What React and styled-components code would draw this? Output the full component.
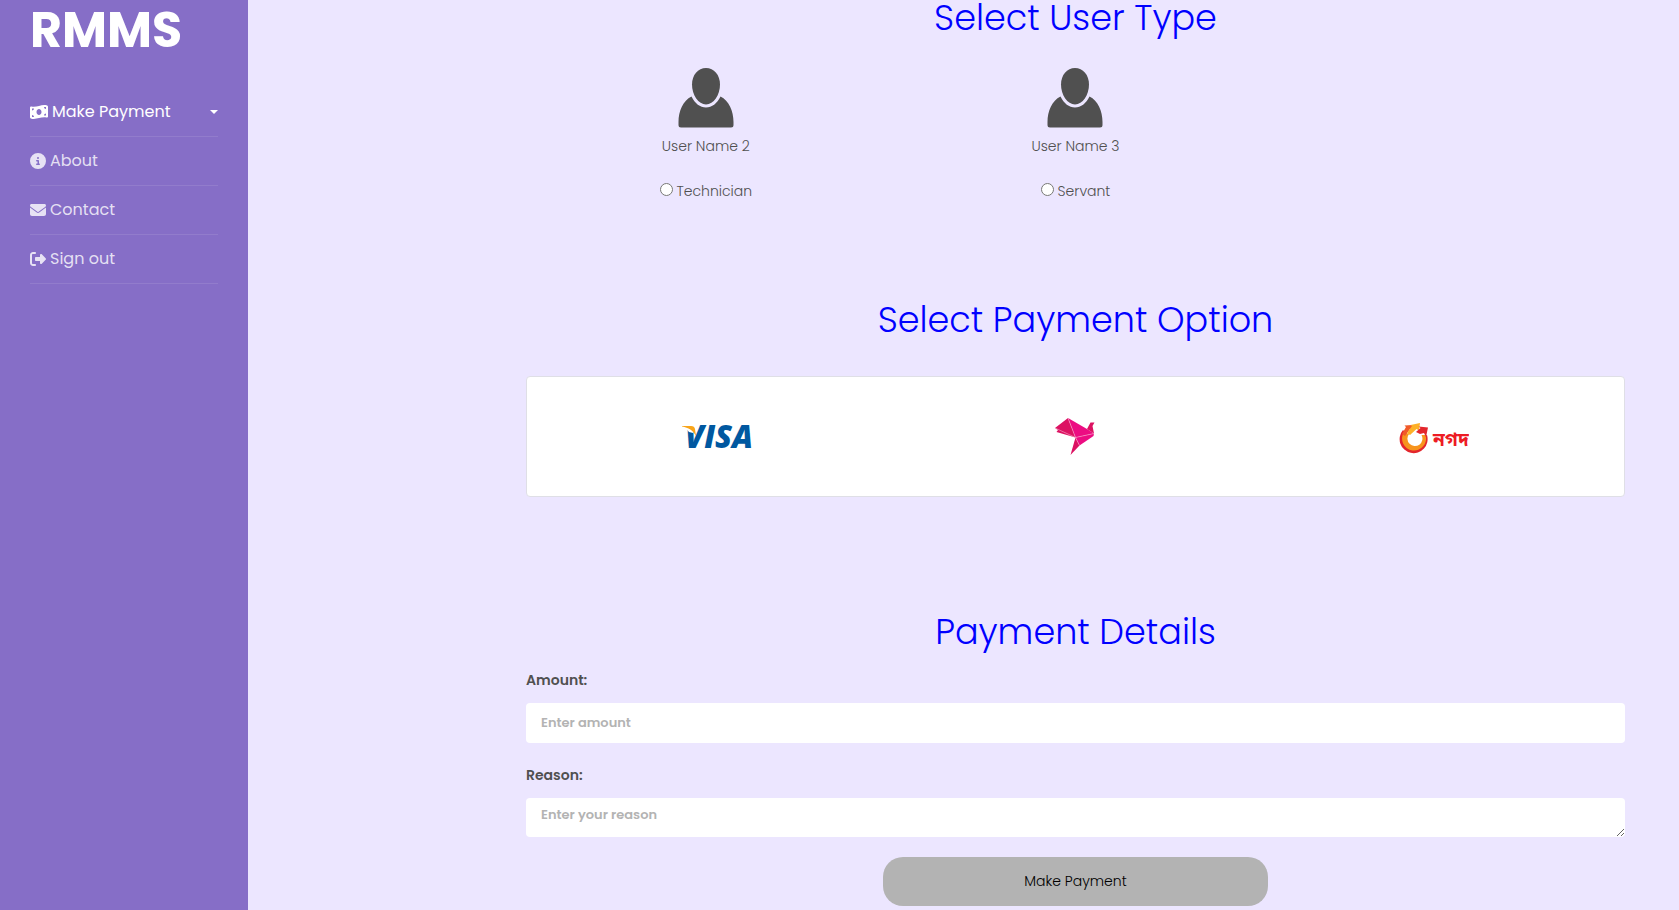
import React from "react";
import styled, { createGlobalStyle } from "styled-components";
import {
  FaMoneyBillWave,
  FaCircleInfo,
  FaEnvelope,
  FaRightFromBracket,
} from "react-icons/fa6";

const GlobalStyle = createGlobalStyle`
  *, *::before, *::after { box-sizing: border-box; }
  body {
    margin: 0;
    background: #ece6ff;
    color: #505050;
    font-family: Poppins, Inter, "Liberation Sans", sans-serif;
    font-size: 14px;
    font-weight: 300;
    line-height: 24px;
  }
`;

const Page = styled.div`
  display: flex;
  min-height: 100vh;
`;

const Sidebar = styled.nav`
  flex: 0 0 248px;
  padding: 0 30px;
  background: #866ec7;
`;

const Brand = styled.a`
  display: block;
  color: #fff;
  font-size: 49px;
  font-weight: 700;
  line-height: 60px;
  text-decoration: none;
`;

const Menu = styled.ul`
  list-style: none;
  margin: 0;
  padding: 28px 0 0;
`;

const MenuLink = styled.a`
  display: flex;
  align-items: center;
  gap: 4px;
  height: 49px;
  border-bottom: 1px solid rgba(255, 255, 255, 0.1);
  color: ${({ $active }) => ($active ? "#fff" : "rgba(255, 255, 255, 0.8)")};
  font-size: 16px;
  font-weight: 400;
  text-decoration: none;
`;

const Caret = styled.span`
  margin-left: auto;
  border-top: 4px solid currentColor;
  border-right: 4px solid transparent;
  border-left: 4px solid transparent;
`;

const Main = styled.main`
  flex: 1;
  min-width: 0;
  padding: 0 54px 4px 278px;
`;

const Heading = styled.h2`
  margin: 0;
  color: #00f;
  font-size: 35px;
  font-weight: 300;
  line-height: 36px;
  text-align: center;
`;

const UserGrid = styled.div`
  display: grid;
  grid-template-columns: repeat(3, 1fr);
  margin: 32px -5px 99px;
`;

const UserCard = styled.div`
  display: flex;
  flex-direction: column;
  align-items: center;
`;

const UserName = styled.span`
  margin: 6px 0 21px;
`;

const RadioLabel = styled.label`
  display: flex;
  align-items: center;
  gap: 4px;
`;

const Radio = styled.input`
  width: 13px;
  height: 13px;
  margin: 0 0 4px;
`;

const PaymentCard = styled.div`
  display: grid;
  grid-template-columns: repeat(3, 1fr);
  align-items: center;
  height: 121px;
  margin: 38px 0 117px;
  padding: 0 11px;
  border: 1px solid #dfdfe6;
  border-radius: 4px;
  background: #fff;
`;

const PaymentOption = styled.button`
  display: flex;
  justify-content: center;
  padding: 0;
  border: 0;
  background: none;
`;

const Form = styled.form`
  display: flex;
  flex-direction: column;
  padding-top: 18px;
`;

const FieldLabel = styled.label`
  margin-bottom: 11px;
  font-weight: 600;
`;

const fieldStyle = `
  width: 100%;
  border: 0;
  border-radius: 4px;
  background: #fff;
  color: #505050;
  font-family: inherit;
  font-size: 13px;
  font-weight: 600;
  line-height: 20px;
  &::placeholder { color: #b3b3b3; opacity: 1; }
`;

const TextField = styled.input`
  ${fieldStyle}
  height: 40px;
  margin-bottom: 20px;
  padding: 0 15px;
`;

const TextArea = styled.textarea`
  ${fieldStyle}
  height: 39px;
  margin-bottom: 20px;
  padding: 7px 15px;
  overflow: hidden;
  resize: vertical;
`;

const SubmitButton = styled.button`
  align-self: center;
  width: 35%;
  height: 49px;
  border: 0;
  border-radius: 20px;
  background: #b3b3b3;
  color: #000;
  font-family: inherit;
  font-size: 14px;
  font-weight: 300;
`;

const Avatar = () => (
  <svg width="56" height="60" viewBox="0 0 56 60" fill="#505050" aria-hidden="true">
    <path d="M28 0C36 0 42 7 42 16.500C42 27 35.500 36.500 28 36.500C20.500 36.500 14 27 14 16.500C14 7 20 0 28 0Z" />
    <path d="M13.500 28.500C17 35.500 22 39.500 28 39.500C34 39.500 39 35.500 42.500 28.500C51 32.500 55.500 43 55.500 54V57Q55.500 59.500 53 59.500H3Q.5 59.500 .5 57V54C.5 43 5 32.500 13.500 28.500Z" />
  </svg>
);

const VisaLogo = () => (
  <svg width="70" height="48" viewBox="0 0 70 48" role="img" aria-label="VISA">
    <text
      x="3"
      y="35"
      fill="#0058a0"
      fontFamily="'Open Sans', sans-serif"
      fontSize="31"
      fontStyle="italic"
      fontWeight="800"
    >
      VISA
    </text>
    <path d="M0 11H13L11 20L7 19Z" fill="#fff" />
    <path d="M0 13H9C11.500 13 12.500 14 13 16L14 23C11 17.500 6.500 14.500 0 13.500Z" fill="#f9a51a" />
  </svg>
);

const BirdLogo = () => (
  <svg width="40" height="38" viewBox="0 0 40 38" role="img" aria-label="bKash">
    <path d="M0 10L13 0L20.500 19.500L1.500 14L3 12Z" fill="#dc1262" />
    <path d="M13 0L32 11L39 15.500L20.500 19.500Z" fill="#ec0c82" />
    <path d="M32 11L35.500 4.500L39.500 4.500L37.500 8L39 15.500Z" fill="#dc1262" />
    <path d="M39 15.500L38.500 18L24.500 27.500L20.500 19.500Z" fill="#ec0c82" />
    <path d="M20.500 19.500L24.500 27.500L15.500 37Z" fill="#dc1262" />
    <path d="M0 10L20.500 19.500L13 0M20.500 19.500L39 15.500M20.500 19.500L24.500 27.500" fill="none" stroke="#f6a6c8" strokeWidth=".6" />
  </svg>
);

const NagadLogo = () => (
  <svg width="70" height="40" viewBox="0 0 70 40" role="img" aria-label="নগদ">
    <path d="M4 13A14 14 0 1 0 28 18L24 19A9 9 0 1 1 8 17Z" fill="#e3262c" />
    <path d="M5 15A12 12 0 1 0 26.500 18L22.500 18A7.500 7.500 0 1 1 10 17Z" fill="#f7941d" />
    <path d="M3 17L7 10L5.500 8.500L13 8L13 12L11 12L6 19Z" fill="#f15a29" />
    <path d="M8 16L13 9L11.500 8L21 6L20 13.500L17.500 12L11 18Z" fill="#fdb027" />
    <path d="M17 15L21.500 11L19.500 9.500L29 10.500L27 20L25 16L21 17Z" fill="#e3262c" />
    <text
      x="34"
      y="29"
      fill="#ed1c24"
      fontFamily="'Noto Sans Bengali', 'Noto Sans', sans-serif"
      fontSize="19"
      fontWeight="700"
    >
      নগদ
    </text>
  </svg>
);

const menuItems = [
  { label: "Make Payment", Icon: FaMoneyBillWave, active: true },
  { label: "About", Icon: FaCircleInfo },
  { label: "Contact", Icon: FaEnvelope },
  { label: "Sign out", Icon: FaRightFromBracket },
];

const users = [
  { name: "User Name 2", role: "Technician" },
  { name: "User Name 3", role: "Servant" },
];

export default function App() {
  return (
    <>
      <GlobalStyle />
      <Page>
        <Sidebar>
          <Brand href="#">RMMS</Brand>
          <Menu>
            {menuItems.map(({ label, Icon, active }) => (
              <li key={label}>
                <MenuLink href="#" $active={active}>
                  <Icon size={active ? 18 : 16} />
                  {label}
                  {active && <Caret />}
                </MenuLink>
              </li>
            ))}
          </Menu>
        </Sidebar>
        <Main>
          <Heading>Select User Type</Heading>
          <UserGrid>
            {users.map(({ name, role }) => (
              <UserCard key={role}>
                <Avatar />
                <UserName>{name}</UserName>
                <RadioLabel>
                  <Radio type="radio" name="userType" value={role} />
                  {role}
                </RadioLabel>
              </UserCard>
            ))}
          </UserGrid>
          <Heading>Select Payment Option</Heading>
          <PaymentCard>
            <PaymentOption type="button"><VisaLogo /></PaymentOption>
            <PaymentOption type="button"><BirdLogo /></PaymentOption>
            <PaymentOption type="button"><NagadLogo /></PaymentOption>
          </PaymentCard>
          <Heading>Payment Details</Heading>
          <Form>
            <FieldLabel htmlFor="amount">Amount:</FieldLabel>
            <TextField id="amount" type="text" placeholder="Enter amount" />
            <FieldLabel htmlFor="reason">Reason:</FieldLabel>
            <TextArea id="reason" rows={1} placeholder="Enter your reason" />
            <SubmitButton type="button">Make Payment</SubmitButton>
          </Form>
        </Main>
      </Page>
    </>
  );
}
